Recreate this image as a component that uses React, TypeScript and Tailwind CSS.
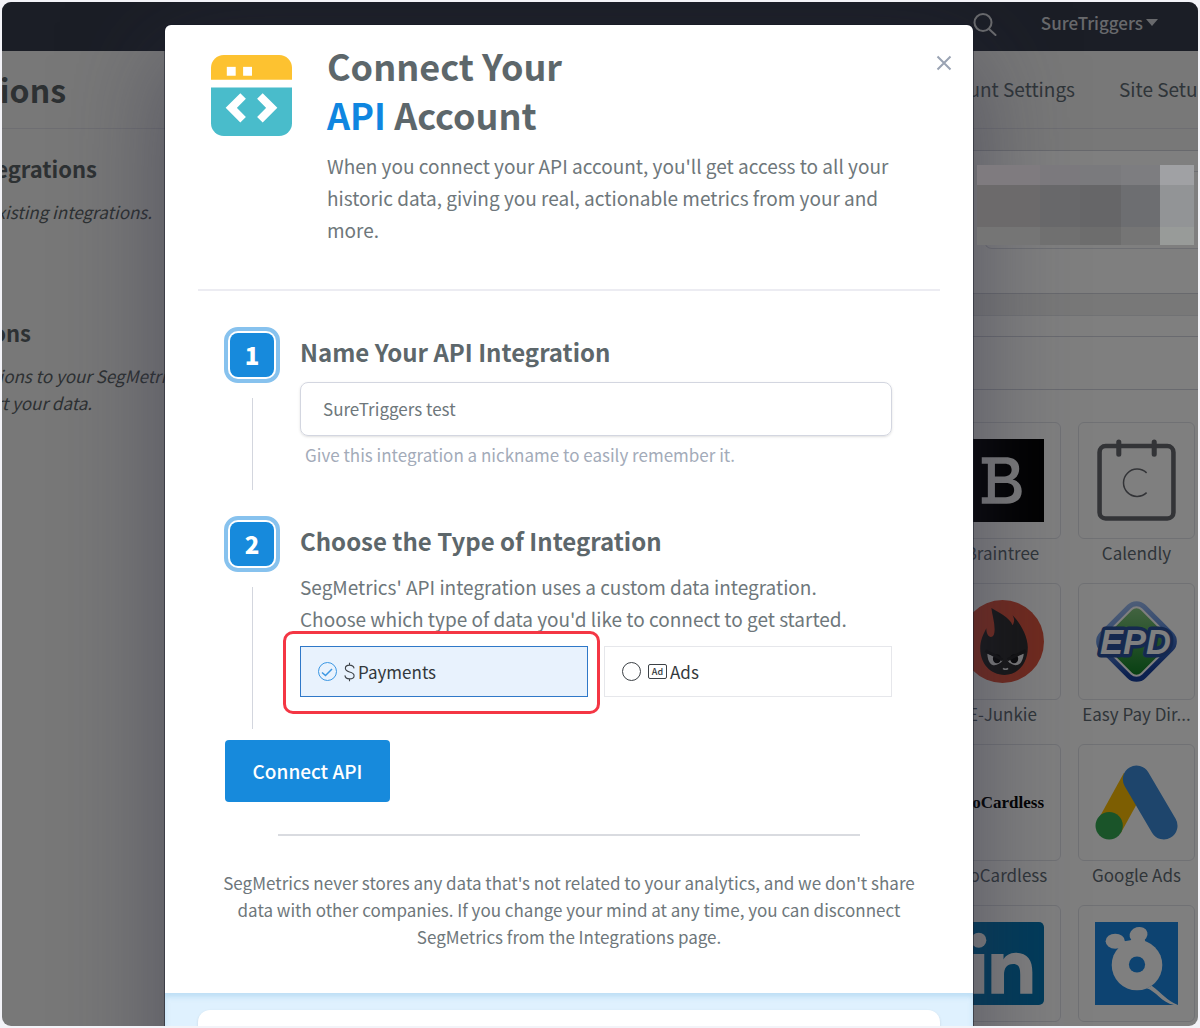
import React, { useState } from "react";

const FONT = "font-['Noto_Sans_CJK_SC','Open_Sans',sans-serif]";

function ApiLogo() {
  return (
    <svg viewBox="0 0 82 82" className="size-[81px] shrink-0" aria-hidden="true">
      <path d="M0 25V13A13 13 0 0 1 13 0H69A13 13 0 0 1 82 13V25Z" fill="#fdc230" />
      <rect x="16" y="12" width="9" height="9" fill="#fff" />
      <rect x="32.500" y="12" width="9" height="9" fill="#fff" />
      <path d="M0 33H82V69A13 13 0 0 1 69 82H13A13 13 0 0 1 0 69Z" fill="#49bccb" />
      <path d="M32.500 41.500L20.500 53.500L32.500 65.500" fill="none" stroke="#fff" strokeWidth="8" />
      <path d="M49.500 41.500L61.500 53.500L49.500 65.500" fill="none" stroke="#fff" strokeWidth="8" />
    </svg>
  );
}

function Braintree() {
  return (
    <svg viewBox="0 0 82 82" className="size-full" aria-hidden="true">
      <rect width="82" height="82" fill="#000" />
      <path
        d="M20.500 18H44C53 18 57.500 22.500 57.500 29.500C57.500 34.500 55 38.500 51 40C57 41.500 60 46 60 51.500C60 59.500 54 64 45 64H20.500V57.500H26.500V24.500H20.500ZM33.500 24.500V37H43C47.500 37 50 34.500 50 30.500C50 26.500 47.500 24.500 43 24.500ZM33.500 43.500V57.500H44C49.500 57.500 52.500 55 52.500 50.500C52.500 46 49.500 43.500 44 43.500Z"
        fill="#f4f4f4"
        fillRule="evenodd"
      />
    </svg>
  );
}

function Calendly() {
  return (
    <svg viewBox="0 0 82 82" className="size-full" fill="none" aria-hidden="true">
      <rect x="4.500" y="7" width="73" height="71.500" rx="6" stroke="#66686f" strokeWidth="4.500" />
      <path d="M23.500 3V15M58.500 3V15" stroke="#66686f" strokeWidth="5" strokeLinecap="round" />
      <path d="M51 33.500A13.500 13.500 0 1 0 51 53" stroke="#66686f" strokeWidth="1.500" />
    </svg>
  );
}

function EJunkie() {
  return (
    <svg viewBox="0 0 82 82" className="size-full" aria-hidden="true">
      <circle cx="41" cy="41" r="41" fill="#e0553d" />
      <path
        d="M30 8C36 12 48 17 51 25C53 21 53 19 51 15C58 22 66 35 66 47C66 63 56 74 43 74C29 74 19 63 19 48C19 41 21 36 25 28C25 38 32 39 33 32C34 24 31 16 30 8Z"
        fill="#2c2c2c"
      />
      <path d="M26 53C27 69 37 65 41 60L32 55Z" fill="#f2f2f2" />
      <path d="M62 53C60 69 50 65 46 60L55 55Z" fill="#f2f2f2" />
      <ellipse cx="35.500" cy="58" rx="4" ry="4.500" fill="#111" />
      <ellipse cx="52.500" cy="58" rx="4" ry="4.500" fill="#111" />
      <path d="M24 50L41 59M64 50L46 59" stroke="#222" strokeWidth="3" />
      <path d="M41.500 67.500Q44 69.500 46.500 67.500" stroke="#f2f2f2" strokeWidth="1.500" fill="none" />
    </svg>
  );
}

function EasyPay() {
  return (
    <svg viewBox="0 0 82 82" className="size-full overflow-visible" aria-hidden="true">
      <defs>
        <linearGradient id="epd-blue" x1="0" y1="0" x2="1" y2="0.6">
          <stop offset="0" stopColor="#a4c1f2" />
          <stop offset="0.45" stopColor="#6c97e0" />
          <stop offset="1" stopColor="#16409f" />
        </linearGradient>
        <linearGradient id="epd-green" x1="0" y1="0" x2="1" y2="1">
          <stop offset="0" stopColor="#8ccb86" />
          <stop offset="1" stopColor="#0a7c20" />
        </linearGradient>
      </defs>
      <rect x="9" y="9" width="64" height="64" rx="13" fill="url(#epd-blue)" transform="rotate(45 41 41)" />
      <rect x="15" y="15" width="52" height="52" rx="7" fill="url(#epd-green)" stroke="#fff" strokeWidth="2" transform="rotate(45 41 41)" />
      <g
        fontFamily="Liberation Sans, sans-serif"
        fontWeight="700"
        fontStyle="italic"
        fontSize="34"
        textAnchor="middle"
        strokeLinejoin="round"
      >
        <text x="40" y="53" fill="#fff" stroke="#2b539e" strokeWidth="7" paintOrder="stroke">
          EPD
        </text>
      </g>
    </svg>
  );
}

function GoCardless() {
  return (
    <div className="flex size-full items-center justify-end overflow-hidden">
      <span className="font-['Liberation_Serif',serif] text-[17px] font-bold whitespace-nowrap text-black">GoCardless</span>
    </div>
  );
}

function GoogleAds() {
  return (
    <svg viewBox="0 0 82 82" className="size-full" fill="none" strokeLinecap="round" aria-hidden="true">
      <path d="M40 18L14 65" stroke="#fbbc04" strokeWidth="26" strokeLinecap="butt" />
      <path d="M41 18L68 64" stroke="#3c8bd9" strokeWidth="27" />
      <circle cx="14" cy="64" r="13.500" fill="#34a853" />
    </svg>
  );
}

function LinkedIn() {
  return (
    <svg viewBox="0 0 82 82" className="size-full" aria-hidden="true">
      <rect width="82" height="82" rx="5" fill="#0077b5" />
      <circle cx="17.500" cy="18" r="7.500" fill="#fff" />
      <path
        d="M11 31.500H23V71H11ZM30 31.500H42V37C44 33.500 48 30.500 54 30.500C66 30.500 70.500 38 70.500 50V71H58.500V52C58.500 45.500 57.500 41.500 51.500 41.500C45 41.500 42.500 46 42.500 52V71H30Z"
        fill="#fff"
      />
    </svg>
  );
}

function Mouse() {
  return (
    <svg viewBox="0 0 82 82" className="size-full" aria-hidden="true">
      <rect width="82" height="82" fill="#1a86e2" />
      <ellipse cx="20" cy="19" rx="9.500" ry="7.500" fill="#fff" />
      <ellipse cx="43" cy="12.500" rx="9" ry="7.500" transform="rotate(-15 43 12.500)" fill="#fff" />
      <path d="M24 22L29 19L35 18L48 14L50 20L42 32L26 30Z" fill="#fff" />
      <circle cx="41.500" cy="42.500" r="25" fill="#fff" />
      <circle cx="41.500" cy="42" r="8" fill="#1a86e2" />
      <path d="M51 65.500C60 68 66 80 78 82H82C71 78 66 70 56 63Z" fill="#fff" />
    </svg>
  );
}

const APPS = [
  { name: "Braintree", Logo: Braintree },
  { name: "Calendly", Logo: Calendly },
  { name: "E-Junkie", Logo: EJunkie },
  { name: "Easy Pay Dir...", Logo: EasyPay },
  { name: "GoCardless", Logo: GoCardless },
  { name: "Google Ads", Logo: GoogleAds },
  { name: "LinkedIn", Logo: LinkedIn },
  { name: "Mouse", Logo: Mouse },
];

function BackgroundPage() {
  return (
    <div className="flex min-h-full flex-col bg-[#f0f0f0] text-[#5f6b73]">
      <header className="flex h-[49px] shrink-0 items-start justify-end bg-[#373d4d] pt-[7px] pr-10">
        <button type="button" aria-label="Search" className="mr-11 pt-[3px]">
          <svg viewBox="0 0 24 24" className="size-6" fill="none" stroke="#d6d8dc" strokeWidth="2" strokeLinecap="round">
            <circle cx="10" cy="10.500" r="8.500" />
            <path d="M16 17L22.500 23" />
          </svg>
        </button>
        <button type="button" className="flex items-center gap-[3px] text-[17px] leading-[27px] font-medium text-[#d0d3d8]">
          SureTriggers
          <svg viewBox="0 0 12 7" className="h-[7px] w-3" aria-hidden="true">
            <path d="M0 0H12L6 7Z" fill="#d0d3d8" />
          </svg>
        </button>
      </header>
      <div className="flex h-[78px] shrink-0 items-center justify-between border-b border-[#dcdce4] pb-[2px]">
        <h1 className="flex w-16 justify-end text-[32px] leading-10 font-bold text-[#5b6367]">Integrations</h1>
        <nav className="flex w-[236px] shrink-0 gap-11 text-[19px] leading-8 whitespace-nowrap">
          <a href="#account" className="flex w-[113px] shrink-0 justify-end">Account Settings</a>
          <a href="#site">Site Setup</a>
        </nav>
      </div>
      <div className="flex flex-1">
        <aside className="min-w-0 flex-1 overflow-hidden pt-[23px] whitespace-nowrap text-[#5b6367]">
          <h2 className="flex w-[95px] justify-end text-[22px] leading-8 font-bold">Integrations</h2>
          <p className="mt-[14px] flex w-[150px] justify-end text-[17px] leading-[27px] italic">existing integrations.</p>
          <h2 className="mt-[91px] flex w-[29px] justify-end text-[22px] leading-8 font-bold">Integrations</h2>
          <p className="mt-[14px] flex w-[180px] justify-end text-[17px] leading-[27px] italic">integrations to your SegMetrics</p>
          <p className="flex w-[90px] justify-end text-[17px] leading-[27px] italic">import your data.</p>
        </aside>
        <main className="flex w-[262px] shrink-0 flex-col pt-[21px]">
          <section className="h-[144px] border-y border-[#d0d3da] bg-white py-5 pl-12">
            <div className="h-[78px] rounded-l-lg border border-r-0 border-[#dcdee6]" />
          </section>
          <section className="mt-[21px] flex-1 border-t border-[#e2e4e9] bg-white">
            <div className="mt-5 h-[54px] border-y border-[#d2d4de]" />
            <ul className="mt-8 grid grid-cols-2 gap-x-[17px] pr-[3px] pl-2">
              {APPS.map(({ name, Logo }) => (
                <li key={name} className="flex h-[161px] min-w-0 flex-col">
                  <div className="h-[117px] shrink-0 rounded-md border border-[#e1e3e9] p-4">
                    <Logo />
                  </div>
                  <p className="truncate text-center text-[17px] leading-[27px]">{name}</p>
                </li>
              ))}
            </ul>
          </section>
        </main>
      </div>
    </div>
  );
}

function Mosaic() {
  return (
    <div className="absolute top-[163px] right-1 grid h-20 w-[217px] grid-cols-[63fr_40fr_41fr_39fr_34fr] grid-rows-[20fr_42fr_18fr]">
      <i className="bg-[#7f7b7f]" />
      <i className="bg-[#7b797d]" />
      <i className="bg-[#7a7a7d]" />
      <i className="bg-[#7d7d80]" />
      <i className="bg-[#a0a1a4]" />
      <i className="bg-[#6c6a6b]" />
      <i className="bg-[#68686a]" />
      <i className="bg-[#666668]" />
      <i className="bg-[#6d6e71]" />
      <i className="bg-[#929496]" />
      <i className="bg-[#757575]" />
      <i className="bg-[#707070]" />
      <i className="bg-[#6d6d6d]" />
      <i className="bg-[#757575]" />
      <i className="bg-[#989b99]" />
    </div>
  );
}

function StepMarker({ n }: { n: number }) {
  return (
    <div className="flex w-14 shrink-0 flex-col items-center">
      <div className="flex size-14 items-center justify-center rounded-[14px] border-4 border-[#87c2ee] bg-white">
        <span className="flex size-11 items-center justify-center rounded-lg bg-[#178adc] text-[24px] leading-none font-black text-white">
          {n}
        </span>
      </div>
      <div className="mt-[15px] w-px flex-1 bg-[#d3d6de]" />
    </div>
  );
}

function DollarIcon() {
  return (
    <svg viewBox="0 0 12 20" className="h-5 w-[11px]" fill="none" stroke="#3c4146" strokeWidth="1.200" aria-hidden="true">
      <path d="M11 6C10.500 3.500 8.500 2.500 6 2.500C3.200 2.500 1.500 4 1.500 6C1.500 8.500 3.500 9.300 6 10C9 10.800 11 11.500 11 14C11 16.200 9 17.500 6 17.500C3.300 17.500 1.300 16.300 1 13.700M6 0V2.500M6 17.500V20" />
    </svg>
  );
}

function AdIcon() {
  return (
    <span className="flex h-[15px] w-[19px] items-center justify-center rounded-xs border border-[#3c4146] text-[9px] leading-none font-medium" aria-hidden="true">
      Ad
    </span>
  );
}

function Choice({
  label,
  icon,
  checked,
  onSelect,
}: {
  label: string;
  icon: React.ReactNode;
  checked: boolean;
  onSelect: () => void;
}) {
  return (
    <label
      className={
        checked
          ? "flex h-[51px] cursor-pointer items-center border border-[#2f78c8] bg-[#e8f2fd] px-4 text-[17px] text-[#33383c]"
          : "flex h-[51px] cursor-pointer items-center border border-[#e6e7eb] bg-white px-4 text-[17px] text-[#33383c]"
      }
    >
      <span className="mr-[7px] grid size-5 place-items-center">
        <input
          type="radio"
          name="integration-type"
          checked={checked}
          onChange={onSelect}
          className="col-start-1 row-start-1 size-[19px] appearance-none rounded-full border border-[#3c4146] checked:border-[#3b97e3]"
        />
        {checked && (
          <svg viewBox="0 0 20 20" className="pointer-events-none col-start-1 row-start-1 size-5" fill="none" stroke="#3b97e3" strokeWidth="1.500">
            <path d="M5 10.500L8.500 13.500L15 7" />
          </svg>
        )}
      </span>
      {icon}
      <span className="ml-[3px]">{label}</span>
    </label>
  );
}

function ConnectDialog() {
  const [name, setName] = useState("SureTriggers test");
  const [type, setType] = useState("payments");
  return (
    <div
      role="dialog"
      aria-labelledby="dialog-title"
      className="w-full max-w-[808px] rounded-t-md bg-white text-[#6e777b] shadow-[0_0_0_1px_rgba(20,24,36,0.5),0_30px_100px_rgba(45,46,70,0.5)]"
    >
      <div className="flex items-start pt-4 pr-5 pl-[46px]">
        <div className="pt-[14px]">
          <ApiLogo />
        </div>
        <div className="ml-[35px] min-w-0 flex-1">
          <h2 id="dialog-title" className="text-[36px] leading-[49px] font-bold text-[#5d676b]">
            Connect Your
            <br />
            <span className="text-[#0f86e0]">API</span> Account
          </h2>
          <p className="mt-[11px] max-w-[590px] text-[19px] leading-8">
            When you connect your API account, you'll get access to all your historic data, giving you real, actionable
            metrics from your and more.
          </p>
        </div>
        <button type="button" aria-label="Close" className="mt-[13px] -ml-4 p-[1px]">
          <svg viewBox="0 0 16 16" className="size-4" fill="none" stroke="#9aa3b3" strokeWidth="2">
            <path d="M1.500 1.500L14.500 14.500M14.500 1.500L1.500 14.500" />
          </svg>
        </button>
      </div>
      <hr className="mx-[33px] mt-[43px] border-t-2 border-[#ececf2]" />

      <form className="mt-9 pr-[81px] pl-[59px]" onSubmit={(e) => e.preventDefault()}>
        <div className="flex gap-5 pb-[26px]">
          <StepMarker n={1} />
          <div className="min-w-0 flex-1 pt-[9px] pb-[22px]">
            <label htmlFor="integration-name" className="block text-[24px] leading-8 font-bold text-[#5d676b]">
              Name Your API Integration
            </label>
            <input
              id="integration-name"
              value={name}
              onChange={(e) => setName(e.target.value)}
              className="mt-[14px] block h-[54px] w-full rounded-lg border border-[#d3d6e0] px-[22px] pb-[2px] text-[17px] shadow-sm outline-none"
            />
            <p className="mt-[5px] pl-[5px] text-[17px] leading-[27px] text-[#a3abb9]">
              Give this integration a nickname to easily remember it.
            </p>
          </div>
        </div>
        <div className="flex gap-5">
          <StepMarker n={2} />
          <div className="min-w-0 flex-1 pt-[9px] pb-8">
            <h3 className="text-[24px] leading-8 font-bold text-[#5d676b]">Choose the Type of Integration</h3>
            <p className="mt-[14px] max-w-[570px] text-[19px] leading-8">
              SegMetrics' API integration uses a custom data integration. Choose which type of data you'd like to
              connect to get started.
            </p>
            <div className="mt-[11px] grid grid-cols-2 gap-4">
              <div className="relative">
                <Choice label="Payments" icon={<DollarIcon />} checked={type === "payments"} onSelect={() => setType("payments")} />
                <div className="pointer-events-none absolute -top-[15px] -right-3 -bottom-[17px] -left-[17px] rounded-[10px] border-3 border-[#f43644]" />
              </div>
              <Choice label="Ads" icon={<AdIcon />} checked={type === "ads"} onSelect={() => setType("ads")} />
            </div>
          </div>
        </div>
        <button type="submit" className="mt-[11px] ml-px h-[62px] w-[165px] rounded-sm bg-[#178adc] text-[19px] font-medium text-white">
          Connect API
        </button>
      </form>

      <hr className="mx-[113px] mt-8 border-t-2 border-[#d9dbe0]" />
      <p className="mx-auto mt-[33px] max-w-[710px] text-center text-[17px] leading-[27px]">
        SegMetrics never stores any data that's not related to your analytics, and we don't share data with other
        companies. If you change your mind at any time, you can disconnect SegMetrics from the Integrations page.
      </p>
      <div className="mt-[43px] bg-[#dff1fe] px-[33px] pt-[17px] inset-shadow-[0_4px_5px_rgba(130,190,230,0.35)]">
        <div className="h-40 rounded-t-xl bg-white shadow-sm" />
      </div>
    </div>
  );
}

export default function App() {
  return (
    <div className={`h-screen bg-[#f3f3f8] p-[2px] ${FONT}`}>
      <div className="relative h-full overflow-hidden rounded-[9px]">
        <div className="h-full overflow-hidden">
          <BackgroundPage />
        </div>
        <div className="absolute inset-0 flex items-start justify-center overflow-y-auto bg-black/50 pt-[23px] pr-[62px] [scrollbar-width:none]">
          <ConnectDialog />
        </div>
        <Mosaic />
      </div>
    </div>
  );
}
